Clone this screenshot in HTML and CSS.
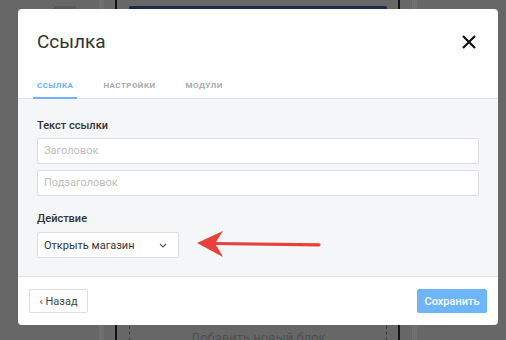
FILE: index.html
```html
<!DOCTYPE html>
<html lang="ru">
<head>
<meta charset="utf-8">
<link rel="stylesheet" href="styles.css">
</head>
<body>
<div class="backdrop">
  <div class="bg-block"></div>
  <div class="bg-band bg-band-left"></div>
  <div class="bg-band bg-band-right"></div>
  <div class="bg-line bg-line-left"></div>
  <div class="bg-line bg-line-right"></div>
  <div class="bg-navy"></div>
  <div class="bg-dash bg-dash-left"></div>
  <div class="bg-dash bg-dash-right"></div>
  <div class="bg-add">Добавить новый блок</div>
</div>

<div class="modal">
  <div class="modal-head">
    <h1 class="modal-title">Ссылка</h1>
    <svg class="close" width="14" height="14" viewBox="0 0 14 14"><path d="M1 1L13 13M13 1L1 13" stroke="#111" stroke-width="2.2" fill="none"/></svg>
  </div>
  <div class="tabs">
    <div class="tab tab-active">Ссылка</div>
    <div class="tab">Настройки</div>
    <div class="tab">Модули</div>
  </div>
  <div class="modal-body">
    <div class="label">Текст ссылки</div>
    <div class="input placeholder">Заголовок</div>
    <div class="input placeholder">Подзаголовок</div>
    <div class="label label-action">Действие</div>
    <div class="action-row">
      <div class="select">
        <span>Открыть магазин</span>
        <svg width="8" height="5" viewBox="0 0 8 5"><path d="M1 1L4 4L7 1" stroke="#555" stroke-width="1.1" fill="none"/></svg>
      </div>
      <svg class="arrow" width="124" height="28" viewBox="0 0 124 28"><path d="M0 12L26 0L18 12.5L26 26Z" fill="#e8403a"/><path d="M17 12.5L122 13.8" stroke="#e8403a" stroke-width="3.2" stroke-linecap="round"/></svg>
    </div>
  </div>
  <div class="modal-foot">
    <button class="btn btn-back">&lsaquo; Назад</button>
    <button class="btn btn-save">Сохранить</button>
  </div>
</div>
</body>
</html>
```
FILE: styles.css
```css
* { box-sizing: border-box; }
html, body { margin: 0; padding: 0; }
body {
  width: 506px;
  height: 340px;
  overflow: hidden;
  background: #676767;
  font-family: Roboto, "Noto Sans", sans-serif;
  position: relative;
}
.backdrop { position: absolute; inset: 0; }
.bg-block { position: absolute; left: 54px; top: 6px; width: 22px; height: 10px; background: #5a5a5a; }
.bg-band { position: absolute; top: 0; bottom: 0; width: 5px; background: #6f6f6f; }
.bg-band-left { left: 99px; }
.bg-band-right { left: 412px; }
.bg-line { position: absolute; top: 0; bottom: 0; width: 2px; background: #141414; }
.bg-line-left { left: 115px; }
.bg-line-right { left: 398px; }
.bg-navy { position: absolute; left: 129px; top: 6px; width: 258px; height: 20px; background: #1d2a4c; border-radius: 2px; }
.bg-dash { position: absolute; top: 326px; height: 20px; width: 0; border-left: 1px dashed #3a3a3a; }
.bg-dash-left { left: 129px; }
.bg-dash-right { left: 386px; }
.bg-add { position: absolute; left: 129px; width: 258px; top: 330px; text-align: center; font-size: 13px; line-height: 15px; color: #505050; }

.modal {
  position: absolute;
  left: 18px;
  top: 9px;
  width: 480px;
  height: 316px;
  background: #fff;
  border-radius: 4px;
  display: flex;
  flex-direction: column;
  overflow: hidden;
}
.modal-head {
  display: flex;
  align-items: flex-start;
  justify-content: space-between;
  padding: 22px 22px 0 19px;
  height: 62px;
}
.modal-title {
  margin: 0;
  font-size: 19px;
  line-height: 22px;
  font-weight: 400;
  color: #333;
}
.close { margin-top: 4px; }
.tabs {
  display: flex;
  gap: 22px;
  padding: 0 0 0 15px;
  border-bottom: 1px solid #e2e3e5;
  height: 28px;
}
.tab {
  padding: 10px 4px 0;
  font-size: 8px;
  font-weight: 700;
  letter-spacing: 0.45px;
  text-transform: uppercase;
  color: #a9a9a9;
}
.tab-active {
  color: #6cb2f4;
  border-bottom: 2px solid #6cb2f4;
  margin-bottom: -1px;
}
.modal-body {
  flex: 1;
  background: #f5f6f8;
  padding: 20px 19px 0;
  border-bottom: 1px solid #e2e3e5;
}
.label {
  font-size: 11px;
  font-weight: 500;
  color: #333;
  margin-bottom: 6px;
}
.label-action { margin-top: 16px; }
.input {
  height: 26px;
  background: #fff;
  border: 1px solid #dcdde0;
  border-radius: 2px;
  padding: 0 6px;
  font-size: 11px;
  line-height: 24px;
  margin-bottom: 6px;
}
.placeholder { color: #bdbdbd; }
.action-row {
  display: flex;
  align-items: center;
  gap: 18px;
}
.select {
  width: 142px;
  height: 26px;
  background: #fff;
  border: 1px solid #dcdde0;
  border-radius: 2px;
  padding: 0 11px 0 6px;
  display: flex;
  align-items: center;
  justify-content: space-between;
  font-size: 11px;
  color: #333;
}
.modal-foot {
  height: 48px;
  display: flex;
  align-items: center;
  justify-content: space-between;
  padding: 0 11px;
}
.btn {
  height: 24px;
  font-family: Roboto, "Noto Sans", sans-serif;
  font-size: 11px;
  border-radius: 2px;
  cursor: pointer;
}
.btn-back {
  width: 59px;
  background: #fff;
  border: 1px solid #dcdde0;
  color: #444;
}
.btn-save {
  width: 70px;
  background: #6db4f8;
  border: none;
  color: #fff;
  font-weight: 500;
}
```
